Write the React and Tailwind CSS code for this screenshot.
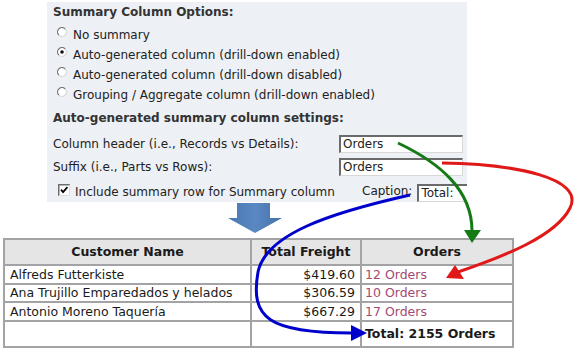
import React from 'react';

const radios = [
  { label: 'No summary', checked: false, mt: 'mt-[3px]' },
  { label: 'Auto-generated column (drill-down enabled)', checked: true, mt: 'mt-0' },
  { label: 'Auto-generated column (drill-down disabled)', checked: false, mt: 'mt-0' },
  { label: 'Grouping / Aggregate column (drill-down enabled)', checked: false, mt: 'mt-0' },
];

const rows = [
  { name: 'Alfreds Futterkiste', freight: '$419.60', orders: '12 Orders', h: 'h-[19px]' },
  { name: 'Ana Trujillo Emparedados y helados', freight: '$306.59', orders: '10 Orders', h: 'h-[18px]' },
  { name: 'Antonio Moreno Taquería', freight: '$667.29', orders: '17 Orders', h: 'h-[19px]' },
];

function Radio({ checked }) {
  return (
    <svg width="10" height="10" viewBox="0 0 10 10" className="shrink-0 mt-[-7px]">
      <circle cx="5" cy="5" r="4.3" fill="#fff" />
      <path d="M1.9,8.1 A4.3,4.3 0 0 1 8.1,1.9" fill="none" stroke="#6e6e6e" strokeWidth="1.2" />
      <path d="M8.1,1.9 A4.3,4.3 0 0 1 1.9,8.1" fill="none" stroke="#d6d6d6" strokeWidth="1.2" />
      {checked && <circle cx="5" cy="5" r="1.8" fill="#111" />}
    </svg>
  );
}

function Checkbox() {
  return (
    <svg width="12" height="12" viewBox="0 0 12 12" className="shrink-0 mt-[5px]">
      <rect x="0" y="0" width="12" height="12" fill="#fff" />
      <path d="M0.75,12 V0.75 H12" fill="none" stroke="#6e6e6e" strokeWidth="1.5" />
      <path d="M11.5,0.75 V11.5 H0.75" fill="none" stroke="#dcdcdc" strokeWidth="1" />
      <path d="M3,5.6 L5.1,8.2 L9.4,3.2" fill="none" stroke="#000" strokeWidth="1.8" />
    </svg>
  );
}

function TextBox({ value, className }) {
  return (
    <div className={`h-[18px] bg-white border-t-2 border-l-2 border-[#6a6a6a] border-r border-b border-r-[#d8d8d8] border-b-[#d8d8d8] pl-[2px] leading-[15px] text-[12px] text-[#222] ${className}`}>
      {value}
    </div>
  );
}

export default function App() {
  return (
    <div className="relative w-[576px] h-[348px] overflow-hidden bg-white font-['DejaVu_Sans',sans-serif]">
      {/* Options panel */}
      <div className="ml-[47px] mt-[2px] w-[420px] h-[200px] bg-[#edf0f4] pl-[6px] overflow-hidden text-[12px] text-[#222]">
        <div className="h-[20px] leading-[20px] font-bold text-[#333]">Summary Column Options:</div>
        {radios.map(r => (
          <div key={r.label} className={`${r.mt} h-[20px] flex items-center gap-[6px] pl-[4px] leading-[20px]`}>
            <Radio checked={r.checked} />
            <span>{r.label}</span>
          </div>
        ))}
        <div className="mt-[3px] h-[20px] leading-[20px] font-bold text-[#333]">Auto-generated summary column settings:</div>
        <div className="mt-[4px] flex items-center h-[23px]">
          <span className="w-[286px] shrink-0 leading-[20px]">Column header (i.e., Records vs Details):</span>
          <TextBox value="Orders" className="w-[124px] shrink-0" />
        </div>
        <div className="flex items-center h-[24px]">
          <span className="w-[286px] shrink-0 leading-[20px]">Suffix (i.e., Parts vs Rows):</span>
          <TextBox value="Orders" className="w-[124px] shrink-0" />
        </div>
        <div className="flex items-start h-[26px]">
          <div className="w-[309px] shrink-0 flex items-start gap-[5px] pl-[5px]">
            <Checkbox />
            <span className="mt-[3px] leading-[20px]">Include summary row for Summary column</span>
          </div>
          <span className="shrink-0 mt-[2px] leading-[20px]">Caption:</span>
          <TextBox value="Total:" className="w-[60px] ml-[5px] mt-[5px] shrink-0" />
        </div>
      </div>

      {/* Down arrow */}
      <div className="h-[36px] pl-[228px]">
        <svg width="54" height="36" viewBox="0 0 54 36">
          <defs>
            <linearGradient id="arr" x1="0" y1="0" x2="1" y2="0">
              <stop offset="0" stopColor="#4a77b0" />
              <stop offset="0.5" stopColor="#5a88c2" />
              <stop offset="1" stopColor="#4571aa" />
            </linearGradient>
          </defs>
          <polygon points="9,1 42,1 42,16 54,16 27,31 0,16 9,16" fill="url(#arr)" />
        </svg>
      </div>

      {/* Result grid */}
      <table className="ml-[3px] w-[509px] table-fixed border-collapse text-[12.5px] leading-[16px] text-[#1a1a1a]">
        <colgroup>
          <col className="w-[247px]" />
          <col className="w-[110px]" />
          <col className="w-[152px]" />
        </colgroup>
        <thead>
          <tr className="h-[26px] bg-[#e5e5e5]">
            <th className="border-2 border-[#a3a3a6] font-bold text-center px-[5px]">Customer Name</th>
            <th className="border-2 border-[#a3a3a6] font-bold text-center px-[5px]">Total Freight</th>
            <th className="border-2 border-[#a3a3a6] font-bold text-center px-[5px]">Orders</th>
          </tr>
        </thead>
        <tbody>
          {rows.map(r => (
            <tr key={r.name} className={r.h}>
              <td className="border-2 border-[#a3a3a6] px-[5px] py-0 whitespace-nowrap">{r.name}</td>
              <td className="border-2 border-[#a3a3a6] px-[5px] py-0 text-right">{r.freight}</td>
              <td className="border-2 border-[#a3a3a6] px-[3px] py-0 text-[#a34a72]">{r.orders}</td>
            </tr>
          ))}
          <tr className="h-[26px]">
            <td className="border-2 border-[#a3a3a6]"></td>
            <td className="border-2 border-[#a3a3a6]"></td>
            <td className="border-2 border-[#a3a3a6] px-[3px] font-bold">Total: 2155 Orders</td>
          </tr>
        </tbody>
      </table>

      {/* Connector curves drawn over the screen */}
      <svg className="absolute inset-0 pointer-events-none" width="576" height="348" viewBox="0 0 576 348">
        <path d="M398,143 C440,163 472,190 472,231" fill="none" stroke="#157a15" strokeWidth="3" />
        <polygon points="464,230 481,230 472,243" fill="#157a15" />

        <path d="M442,163 C515,164 585,178 570,208 C556,236 505,256 458,272" fill="none" stroke="#e01818" strokeWidth="3" />
        <polygon points="446,278 455,265 464,279" fill="#e01818" />

        <path d="M410,195 C330,213 266,234 258,272 C250,318 268,333 352,333" fill="none" stroke="#0000cc" strokeWidth="3" />
        <polygon points="351,325 351,341 367,333" fill="#0000cc" />
      </svg>
    </div>
  );
}
